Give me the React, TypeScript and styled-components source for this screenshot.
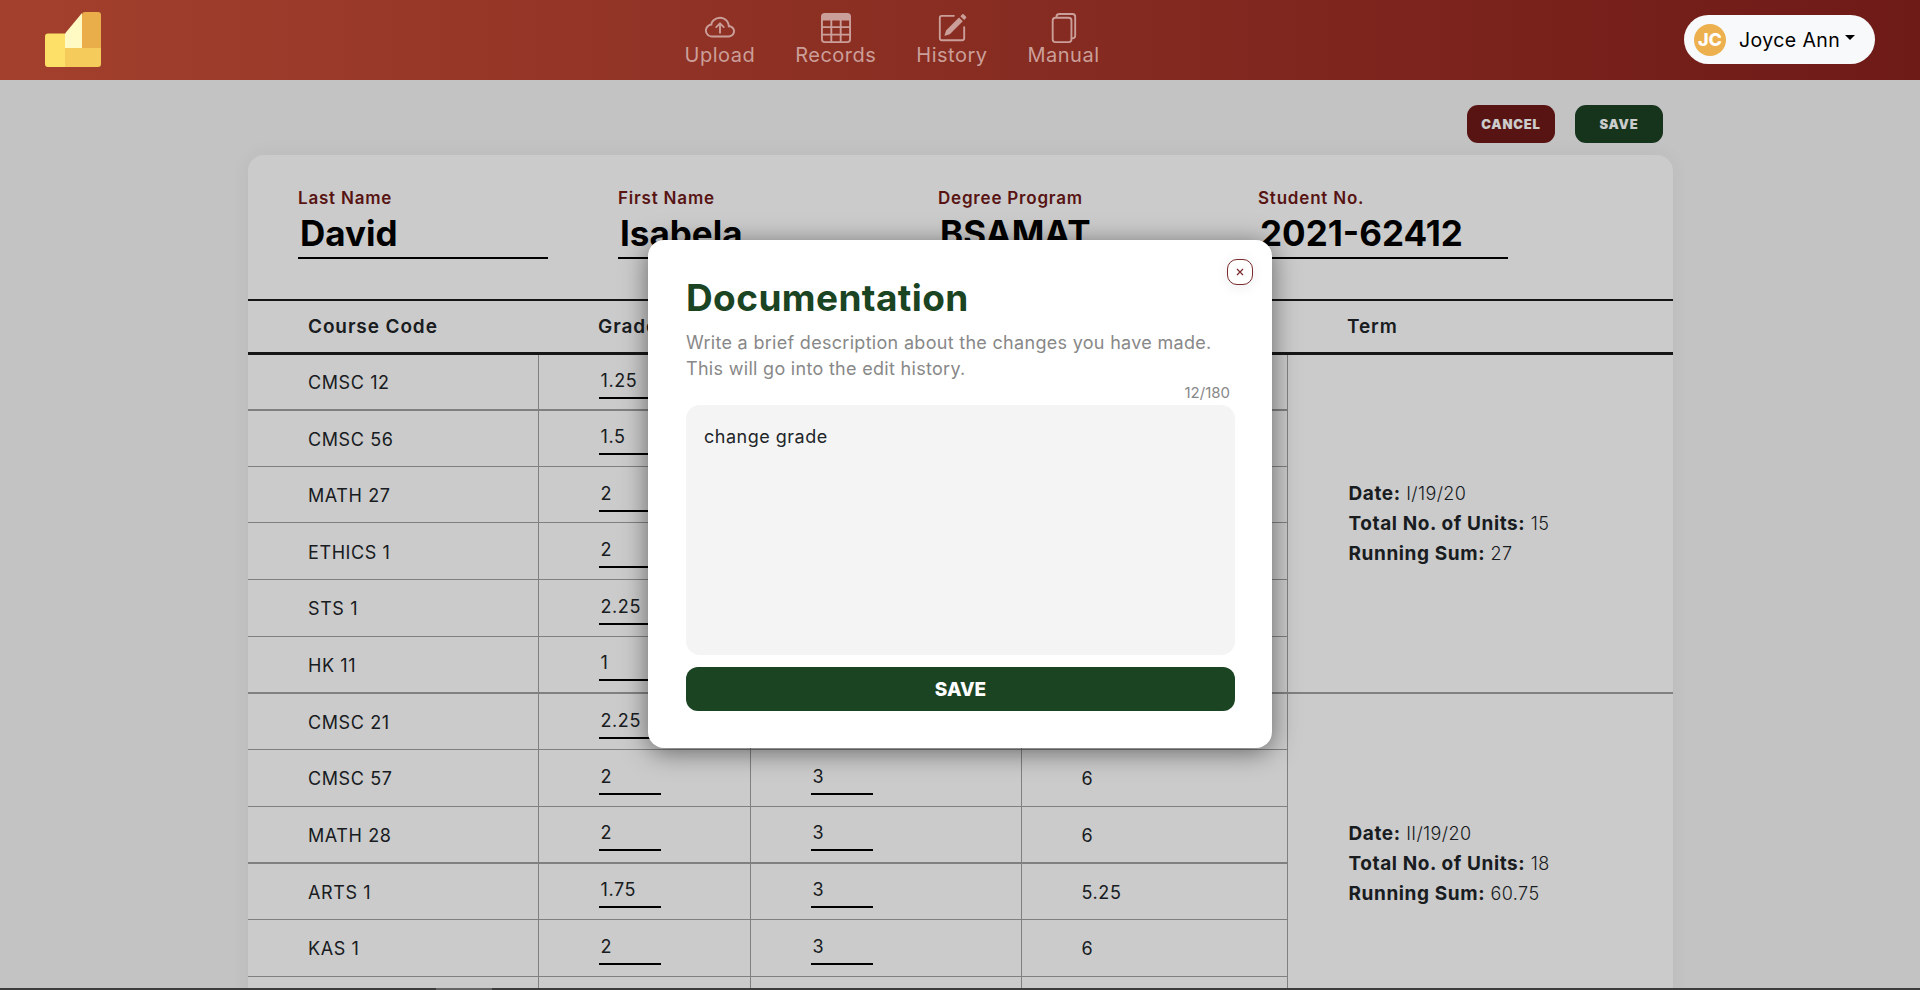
import React from 'react'
import styled, { createGlobalStyle } from 'styled-components'
import { BsCloudArrowUp, BsTable, BsPencilSquare, BsFiles } from 'react-icons/bs'

const GlobalStyle = createGlobalStyle`
  html, body {
    margin: 0;
    height: 100%;
    overflow: hidden;
  }
  body {
    background: #f4f4f4;
    font-family: Inter, "Open Sans", sans-serif;
    color: #212529;
  }
  * {
    box-sizing: border-box;
  }
`

const Page = styled.div`
  position: relative;
  height: 990px;
  overflow: hidden;
`

const Navbar = styled.header`
  position: relative;
  z-index: 3;
  height: 80px;
  display: grid;
  grid-template-columns: 1fr auto 1fr;
  align-items: center;
  padding: 0 45px;
  background: linear-gradient(90deg, #a3402d 0%, #6e1a17 100%);
`

const Logo = styled.svg`
  display: block;
  width: 56px;
  height: 55px;
  margin-top: -1px;
`

const NavLinks = styled.nav`
  display: flex;
  align-items: flex-start;
  gap: 40px;
  margin-right: 136px;
`

const NavLink = styled.a`
  display: flex;
  flex-direction: column;
  align-items: center;
  color: #cb9f99;
  font-size: 20px;
  line-height: 24px;
  letter-spacing: 0.5px;

  svg {
    display: block;
    width: 30px;
    height: 30px;
  }
`

const UserPill = styled.button`
  justify-self: end;
  display: flex;
  align-items: center;
  width: 191px;
  height: 49px;
  margin-top: -1px;
  padding: 0 10px;
  border: 0;
  border-radius: 25px;
  background: #f8f9fa;
  color: #000;
  font: inherit;
  font-size: 19.5px;
  letter-spacing: 0.4px;
`

const Avatar = styled.span`
  display: flex;
  align-items: center;
  justify-content: center;
  width: 32px;
  height: 32px;
  margin-right: 13px;
  border-radius: 50%;
  background: #ecb04e;
  color: #fff;
  font-size: 18px;
  font-weight: 800;
  letter-spacing: 0;
`

const Caret = styled.span`
  width: 0;
  height: 0;
  margin-left: 5px;
  margin-bottom: 4px;
  border-top: 5px solid #000;
  border-left: 5.5px solid transparent;
  border-right: 5.5px solid transparent;
`

const Content = styled.main`
  display: flex;
  flex-direction: column;
  align-items: flex-end;
  padding: 25px 247px 0 248px;
`

const Actions = styled.div`
  display: flex;
  gap: 20px;
  margin-right: 10px;
  margin-bottom: 12px;
`

const ActionButton = styled.button<{ $tone: string }>`
  width: 88px;
  height: 38px;
  border: 0;
  border-radius: 11px;
  background: ${(p) => p.$tone};
  color: #fff;
  font: inherit;
  font-size: 13px;
  font-weight: 900;
  letter-spacing: 0.8px;
`

const Card = styled.section`
  width: 100%;
  background: #fefefe;
  border-radius: 16px 16px 0 0;
  box-shadow: 0 0 20px rgba(0, 0, 0, 0.05);
`

const Fields = styled.div`
  display: flex;
  gap: 70px;
  padding: 33px 50px 0;
  height: 144px;
`

const Field = styled.div`
  width: 250px;
`

const FieldLabel = styled.div`
  color: #6f1918;
  font-size: 17px;
  font-weight: 600;
  line-height: 20px;
  letter-spacing: 0.8px;
`

const FieldValue = styled.div`
  height: 51px;
  padding-left: 2px;
  border-bottom: 2px solid #000;
  color: #000;
  font-size: 35px;
  font-weight: 700;
  line-height: 50px;
`

const Table = styled.table`
  width: 100%;
  table-layout: fixed;
  border-collapse: collapse;
  font-size: 18px;
  letter-spacing: 0.6px;
  color: #212529;
`

const HeadCell = styled.th`
  height: 53px;
  padding: 0 0 0 60px;
  border-top: 2px solid #1c1c1c;
  border-bottom: 3px solid #1c1c1c;
  text-align: left;
  font-size: 19px;
  font-weight: 600;
  letter-spacing: 0.9px;
`

const Row = styled.tr`
  height: 56.67px;
`

const Cell = styled.td<{ $thick?: boolean }>`
  padding: 0 0 0 60px;
  border-bottom: ${(p) => (p.$thick ? 2 : 1)}px solid #a0a0a0;
  border-right: 1px solid #a0a0a0;
`

const CodeCell = styled(Cell)`
  padding-top: 2px;
`

const TermCell = styled.td`
  padding: 2px 0 0 61px;
  border-bottom: 2px solid #a0a0a0;
  line-height: 30px;
  letter-spacing: 0.4px;
`

const TermLine = styled.div`
  font-weight: 300;

  b {
    font-size: 19px;
    font-weight: 700;
    letter-spacing: 0.6px;
  }
`

const GradeInput = styled.div`
  width: 62px;
  height: 36px;
  margin-bottom: 2px;
  padding-left: 2px;
  border-bottom: 2px solid #000;
  line-height: 36px;
`

const Backdrop = styled.div`
  position: absolute;
  inset: 0;
  z-index: 2;
  background: rgba(0, 0, 0, 0.2);
`

const BottomEdge = styled.div`
  position: absolute;
  z-index: 5;
  left: 0;
  right: 0;
  bottom: 0;
  height: 2px;
  padding-left: 436px;
  background: #3c3c3c;

  &::before {
    content: '';
    display: block;
    width: 56px;
    height: 2px;
    background: #666;
  }
`

const Modal = styled.div`
  position: absolute;
  z-index: 4;
  top: 240px;
  left: 648px;
  width: 624px;
  height: 508px;
  padding: 0 37px 0 38px;
  background: #fff;
  border-radius: 16px;
  box-shadow: 0 4px 26px rgba(0, 0, 0, 0.5);
`

const CloseButton = styled.button`
  position: absolute;
  top: 19px;
  right: 19px;
  display: flex;
  align-items: center;
  justify-content: center;
  width: 26px;
  height: 26px;
  padding: 0;
  border: 1px solid #7a2a2a;
  border-radius: 10px;
  background: #fff;
  box-shadow: 0 2px 14px rgba(0, 0, 0, 0.08);
`

const ModalTitle = styled.h2`
  margin: 0;
  padding-top: 37px;
  color: #1b4423;
  font-size: 37px;
  font-weight: 700;
  line-height: 42px;
  letter-spacing: 0.4px;
`

const ModalText = styled.p`
  margin: 11px 0 0;
  color: #888;
  font-size: 18px;
  line-height: 26px;
  letter-spacing: 0.3px;
`

const Counter = styled.div`
  height: 23px;
  padding-right: 5px;
  color: #888;
  font-size: 15px;
  line-height: 22px;
  text-align: right;
`

const NoteArea = styled.div`
  height: 250px;
  padding: 20px 18px;
  border-radius: 14px;
  background: #f4f4f4;
  color: #212529;
  font-size: 18px;
  line-height: 24px;
  letter-spacing: 0.5px;
`

const ModalSave = styled.button`
  display: block;
  width: 100%;
  height: 44px;
  margin-top: 12px;
  border: 0;
  border-radius: 12px;
  background: #1b4423;
  color: #fff;
  font: inherit;
  font-size: 19px;
  font-weight: 800;
`

const fields = [
  { label: 'Last Name', value: 'David' },
  { label: 'First Name', value: 'Isabela' },
  { label: 'Degree Program', value: 'BSAMAT' },
  { label: 'Student No.', value: '2021-62412' },
]

const terms = [
  {
    date: 'I/19/20',
    units: '15',
    sum: '27',
    rows: [
      { code: 'CMSC 12', grade: '1.25', units: '3', weight: '3.75', thick: true },
      { code: 'CMSC 56', grade: '1.5', units: '3', weight: '4.5' },
      { code: 'MATH 27', grade: '2', units: '3', weight: '6' },
      { code: 'ETHICS 1', grade: '2', units: '3', weight: '6' },
      { code: 'STS 1', grade: '2.25', units: '3', weight: '6.75' },
      { code: 'HK 11', grade: '1', units: '0', weight: '0', thick: true },
    ],
  },
  {
    date: 'II/19/20',
    units: '18',
    sum: '60.75',
    rows: [
      { code: 'CMSC 21', grade: '2.25', units: '3', weight: '6.75' },
      { code: 'CMSC 57', grade: '2', units: '3', weight: '6' },
      { code: 'MATH 28', grade: '2', units: '3', weight: '6', thick: true },
      { code: 'ARTS 1', grade: '1.75', units: '3', weight: '5.25' },
      { code: 'KAS 1', grade: '2', units: '3', weight: '6' },
      { code: '', grade: '', units: '', weight: '' },
    ],
  },
]

const navItems = [
  { label: 'Upload', icon: <BsCloudArrowUp /> },
  { label: 'Records', icon: <BsTable /> },
  { label: 'History', icon: <BsPencilSquare /> },
  { label: 'Manual', icon: <BsFiles /> },
]

const App = () => {
  return (
    <Page>
      <GlobalStyle />
      <Navbar>
        <Logo viewBox='0 0 56 55'>
          <path d='M3 21.500h17V55H3a3 3 0 0 1-3-3V24.500a3 3 0 0 1 3-3z' fill='#fde068' />
          <path d='M20 36h36v16a3 3 0 0 1-3 3H20z' fill='#f5cb5c' />
          <path d='M37 3a3 3 0 0 1 3-3h13a3 3 0 0 1 3 3v33H37z' fill='#e9ad4a' />
          <path d='M20 21.500L37 1v35H20z' fill='#fffac4' />
        </Logo>
        <NavLinks>
          {navItems.map((item) => (
            <NavLink key={item.label}>
              {item.icon}
              {item.label}
            </NavLink>
          ))}
        </NavLinks>
        <UserPill>
          <Avatar>JC</Avatar>
          Joyce Ann
          <Caret />
        </UserPill>
      </Navbar>
      <Content>
        <Actions>
          <ActionButton $tone='#6f1918'>CANCEL</ActionButton>
          <ActionButton $tone='#1c4224'>SAVE</ActionButton>
        </Actions>
        <Card>
          <Fields>
            {fields.map((field) => (
              <Field key={field.label}>
                <FieldLabel>{field.label}</FieldLabel>
                <FieldValue>{field.value}</FieldValue>
              </Field>
            ))}
          </Fields>
          <Table>
            <colgroup>
              <col width='290' />
              <col width='212' />
              <col width='271' />
              <col width='266' />
              <col width='386' />
            </colgroup>
            <thead>
              <tr>
                <HeadCell>Course Code</HeadCell>
                <HeadCell>Grade</HeadCell>
                <HeadCell>Units</HeadCell>
                <HeadCell>Weight</HeadCell>
                <HeadCell>Term</HeadCell>
              </tr>
            </thead>
            <tbody>
              {terms.map((term) =>
                term.rows.map((row, i) => (
                  <Row key={term.date + i}>
                    <CodeCell $thick={row.thick}>{row.code}</CodeCell>
                    <Cell $thick={row.thick}>
                      <GradeInput>{row.grade}</GradeInput>
                    </Cell>
                    <Cell $thick={row.thick}>
                      <GradeInput>{row.units}</GradeInput>
                    </Cell>
                    <CodeCell $thick={row.thick}>{row.weight}</CodeCell>
                    {i === 0 && (
                      <TermCell rowSpan={term.rows.length}>
                        <TermLine>
                          <b>Date:</b> {term.date}
                        </TermLine>
                        <TermLine>
                          <b>Total No. of Units:</b> {term.units}
                        </TermLine>
                        <TermLine>
                          <b>Running Sum:</b> {term.sum}
                        </TermLine>
                      </TermCell>
                    )}
                  </Row>
                )),
              )}
            </tbody>
          </Table>
        </Card>
      </Content>
      <Backdrop />
      <Modal>
        <CloseButton aria-label='Close'>
          <svg width='10' height='10' viewBox='0 0 10 10'>
            <path d='M2 2l6 6M8 2l-6 6' stroke='#7a2a2a' strokeWidth='1.2' fill='none' />
          </svg>
        </CloseButton>
        <ModalTitle>Documentation</ModalTitle>
        <ModalText>
          Write a brief description about the changes you have made.
          <br />
          This will go into the edit history.
        </ModalText>
        <Counter>12/180</Counter>
        <NoteArea>change grade</NoteArea>
        <ModalSave>SAVE</ModalSave>
      </Modal>
      <BottomEdge />
    </Page>
  )
}

export default App
